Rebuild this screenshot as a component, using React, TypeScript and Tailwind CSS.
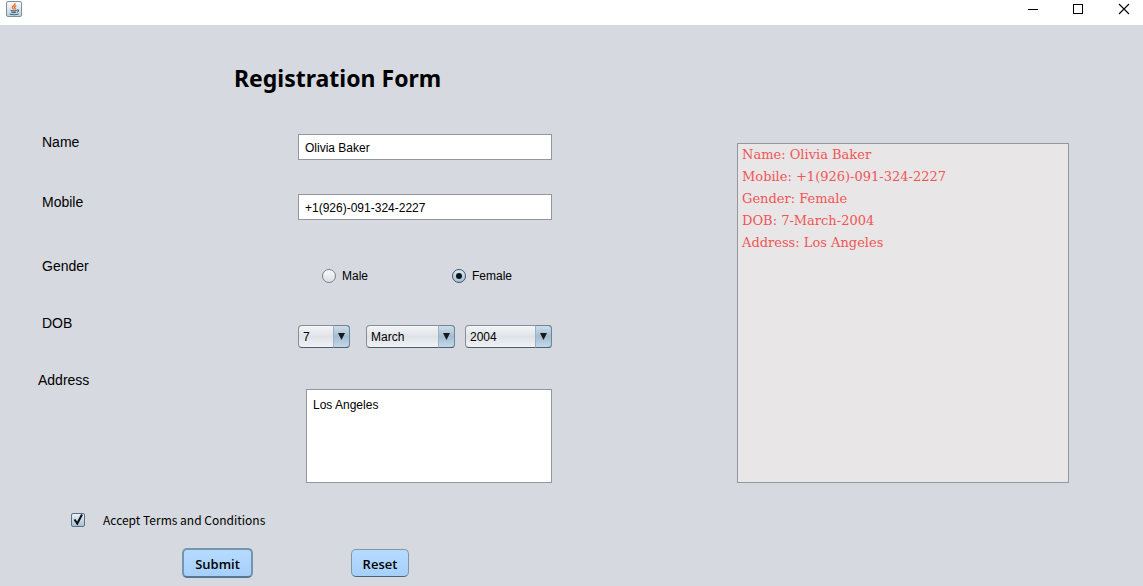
import { useState } from "react";
import type { ReactNode } from "react";

const fieldClass = "border border-[#92979f] bg-white text-xs text-black outline-none";

function JavaIcon() {
  return (
    <svg className="h-4 w-4" viewBox="0 0 16 16" fill="none" aria-hidden="true">
      <defs>
        <linearGradient id="tile" x1="0" y1="0" x2="0" y2="1">
          <stop offset="0" stopColor="#fafbfc" />
          <stop offset="1" stopColor="#c3d0d9" />
        </linearGradient>
      </defs>
      <rect x="0.5" y="0.5" width="15" height="15" rx="1.5" fill="url(#tile)" stroke="#7890a0" />
      <path d="M8.9 2.2c.8 1.9-3 2.6-2.5 4.3.2.7 1 1 1.2 1.9M10.3 4.6c-1.8.8-2.3 1.6-1.2 2.7.3.4 0 .8-.3 1.1" stroke="#e8702a" strokeWidth="1.4" />
      <path d="M4.6 9.3c1.8.7 4.4.7 6 0M5.2 11.1c1.6.6 3.6.6 5 0M3.6 13c2.6.8 6.6.8 9 0M10.8 9c2.2-.5 2.4 1.4.2 2.2" stroke="#3f6888" strokeWidth="1.1" />
    </svg>
  );
}

function TitleBar() {
  return (
    <header className="flex h-[25px] shrink-0 justify-between bg-white pl-1.5">
      <div className="pt-px">
        <JavaIcon />
      </div>
      <div className="flex h-[18px]">
        <button type="button" aria-label="Minimize" className="flex w-[45px] items-center justify-center">
          <svg className="h-3 w-3" viewBox="0 0 12 12" shapeRendering="crispEdges">
            <path d="M1 6.5h10" stroke="#000" />
          </svg>
        </button>
        <button type="button" aria-label="Maximize" className="flex w-[45px] items-center justify-center">
          <svg className="h-3 w-3" viewBox="0 0 12 12" fill="none" shapeRendering="crispEdges">
            <path d="M1.5 1.5h9v9h-9z" stroke="#000" />
          </svg>
        </button>
        <button type="button" aria-label="Close" className="flex w-[43px] items-center justify-center pl-[5px]">
          <svg className="h-3 w-3" viewBox="0 0 12 12">
            <path d="M1 1l10 10M11 1L1 11" stroke="#000" strokeWidth="1.1" />
          </svg>
        </button>
      </div>
    </header>
  );
}

function Row({ label, htmlFor, children }: { label: string; htmlFor: string; children: ReactNode }) {
  return (
    <div className="grid grid-cols-[256fr_254fr] items-start">
      <label htmlFor={htmlFor} className="text-sm leading-5">
        {label}
      </label>
      {children}
    </div>
  );
}

function Picker({ id, label, options, value, onChange, width }: {
  id: string;
  label: string;
  options: string[];
  value: string;
  onChange: (v: string) => void;
  width: string;
}) {
  return (
    <div className={`relative ${width}`}>
      <select
        id={id}
        aria-label={label}
        value={value}
        onChange={(e) => onChange(e.target.value)}
        className="block h-[23px] w-full appearance-none rounded border border-[#868e98] border-b-[#4f5b67] bg-linear-to-b from-[#f4f5f7] via-[#dfe2e7] to-[#f0f2f5] pl-1 text-xs text-black outline-none"
      >
        {options.map((o) => (
          <option key={o}>{o}</option>
        ))}
      </select>
      <span className="pointer-events-none absolute inset-y-0 right-0 flex w-[17px] items-center justify-center rounded-r border border-[#6d859b] border-b-[#4a6176] border-l-[#9db1c3] bg-linear-to-b from-[#cfdde9] via-[#a4bdd2] to-[#c5d8e8]">
        <svg className="h-[7px] w-[7px]" viewBox="0 0 7 7">
          <path d="M0 0h7L3.5 7z" fill="#15191c" />
        </svg>
      </span>
    </div>
  );
}

function Radio({ label, checked, onChange }: { label: string; checked: boolean; onChange: () => void }) {
  return (
    <label className="flex items-center gap-1.5 text-xs leading-5">
      <span className="relative flex h-3.5 w-3.5">
        <input
          type="radio"
          name="gender"
          checked={checked}
          onChange={onChange}
          className="h-3.5 w-3.5 appearance-none rounded-full border border-[#7b8188] bg-linear-to-b from-[#fafafb] to-[#dcdfe4] checked:border-[#3f5266] checked:from-[#dce8f2] checked:to-[#a7c0d5]"
        />
        {checked && (
          <span className="pointer-events-none absolute inset-0 m-auto h-1.5 w-1.5 rounded-full bg-[#0d1318]" />
        )}
      </span>
      {label}
    </label>
  );
}

const days = Array.from({ length: 31 }, (_, i) => String(i + 1));
const months = ["January", "February", "March", "April", "May", "June", "July", "August", "September", "October", "November", "December"];
const years = Array.from({ length: 30 }, (_, i) => String(1990 + i));

export default function App() {
  const [name, setName] = useState("Olivia Baker");
  const [mobile, setMobile] = useState("+1(926)-091-324-2227");
  const [gender, setGender] = useState("Female");
  const [day, setDay] = useState("7");
  const [month, setMonth] = useState("March");
  const [year, setYear] = useState("2004");
  const [address, setAddress] = useState("Los Angeles");
  const [accepted, setAccepted] = useState(true);
  const summarize = () =>
    `Name: ${name}\nMobile: ${mobile}\nGender: ${gender}\nDOB: ${day}-${month}-${year}\nAddress: ${address}`;
  const [summary, setSummary] = useState(summarize);

  const reset = () => {
    setName("");
    setMobile("");
    setAddress("");
    setAccepted(false);
    setSummary("");
  };

  return (
    <div className="flex min-h-screen flex-col bg-[#d6d9df] font-['Liberation_Sans',Arial,sans-serif] text-black">
      <TitleBar />
      <main className="grid flex-1 grid-cols-[552fr_591fr] items-start">
        <form
          className="flex flex-col pt-[35px]"
          onSubmit={(e) => {
            e.preventDefault();
            if (accepted) setSummary(summarize());
          }}
        >
          <h1 className="pl-[234px] font-['Noto_Sans','Open_Sans',sans-serif] text-[23px] leading-9 font-bold">
            Registration Form
          </h1>
          <div className="flex flex-col pt-9 pl-[42px]">
            <Row label="Name" htmlFor="name">
              <input
                id="name"
                value={name}
                onChange={(e) => setName(e.target.value)}
                className={`mt-0.5 h-[26px] w-full px-1.5 pt-px ${fieldClass}`}
              />
            </Row>
            <div className="mt-8">
              <Row label="Mobile" htmlFor="mobile">
                <input
                  id="mobile"
                  value={mobile}
                  onChange={(e) => setMobile(e.target.value)}
                  className={`mt-0.5 h-[26px] w-full px-1.5 pt-px ${fieldClass}`}
                />
              </Row>
            </div>
            <fieldset className="mt-9 grid grid-cols-[256fr_254fr] items-start">
              <legend className="float-left text-sm leading-5">Gender</legend>
              <div className="mt-2.5 grid grid-cols-[130px_1fr] pl-6">
                <Radio label="Male" checked={gender === "Male"} onChange={() => setGender("Male")} />
                <Radio label="Female" checked={gender === "Female"} onChange={() => setGender("Female")} />
              </div>
            </fieldset>
            <div className="mt-[27px]">
              <Row label="DOB" htmlFor="day">
                <div className="mt-3 flex">
                  <Picker id="day" label="Day" options={days} value={day} onChange={setDay} width="w-[52px]" />
                  <span className="w-4" />
                  <Picker id="month" label="Month" options={months} value={month} onChange={setMonth} width="w-[89px]" />
                  <span className="w-2.5" />
                  <Picker id="year" label="Year" options={years} value={year} onChange={setYear} width="flex-1" />
                </div>
              </Row>
            </div>
          </div>
          <div className="mt-[22px] grid grid-cols-[268fr_246fr] items-start pl-[38px]">
            <label htmlFor="address" className="text-sm leading-5">
              Address
            </label>
            <textarea
              id="address"
              value={address}
              onChange={(e) => setAddress(e.target.value)}
              className={`mt-[19px] block h-[94px] w-full resize-none px-1.5 py-[7px] leading-4 ${fieldClass}`}
            />
          </div>
          <label className="mt-[27px] flex items-center gap-[18px] self-start pl-[71px] font-['Noto_Sans_CJK_JP',sans-serif] text-xs leading-5">
            <span className="relative flex h-3.5 w-3.5">
              <input
                type="checkbox"
                checked={accepted}
                onChange={(e) => setAccepted(e.target.checked)}
                className="h-3.5 w-3.5 appearance-none rounded-xs border border-[#5a7085] bg-linear-to-b from-[#eaf0f5] to-[#a9c1d5]"
              />
              {accepted && (
                <svg className="pointer-events-none absolute inset-0 h-3.5 w-3.5" viewBox="0 0 14 14" fill="none">
                  <path d="M3.5 6.5L6.3 10.5L11 1.5" stroke="#0b1014" strokeWidth="2" />
                </svg>
              )}
            </span>
            Accept Terms and Conditions
          </label>
          <div className="mt-[18px] flex items-center gap-[98px] pb-2 pl-[182px] font-['Open_Sans','Noto_Sans',sans-serif] text-[13px] leading-5 font-semibold">
            <button
              type="submit"
              className="h-[30px] w-[71px] rounded-[5px] border-2 border-[#7594ae] border-b-[#587793] bg-linear-to-b from-[#b5dbff] to-[#a6d0fb] pt-0.5"
            >
              Submit
            </button>
            <button
              type="button"
              onClick={reset}
              className="h-7 w-[58px] rounded-[5px] border border-[#8296a8] border-b-[#4e6274] bg-linear-to-b from-[#b5dbff] to-[#a6d0fb] pt-0.5"
            >
              Reset
            </button>
          </div>
        </form>
        <div className="grid grid-cols-[185fr_332fr_74fr] pt-[118px]">
          <textarea
            readOnly
            aria-label="Submitted details"
            value={summary}
            className="col-start-2 block h-[340px] w-full resize-none border border-[#92979f] bg-[#e8e6e7] px-1 font-['DejaVu_Serif',serif] text-[13px] leading-[22px] text-[#f05555] outline-none"
          />
        </div>
      </main>
    </div>
  );
}
